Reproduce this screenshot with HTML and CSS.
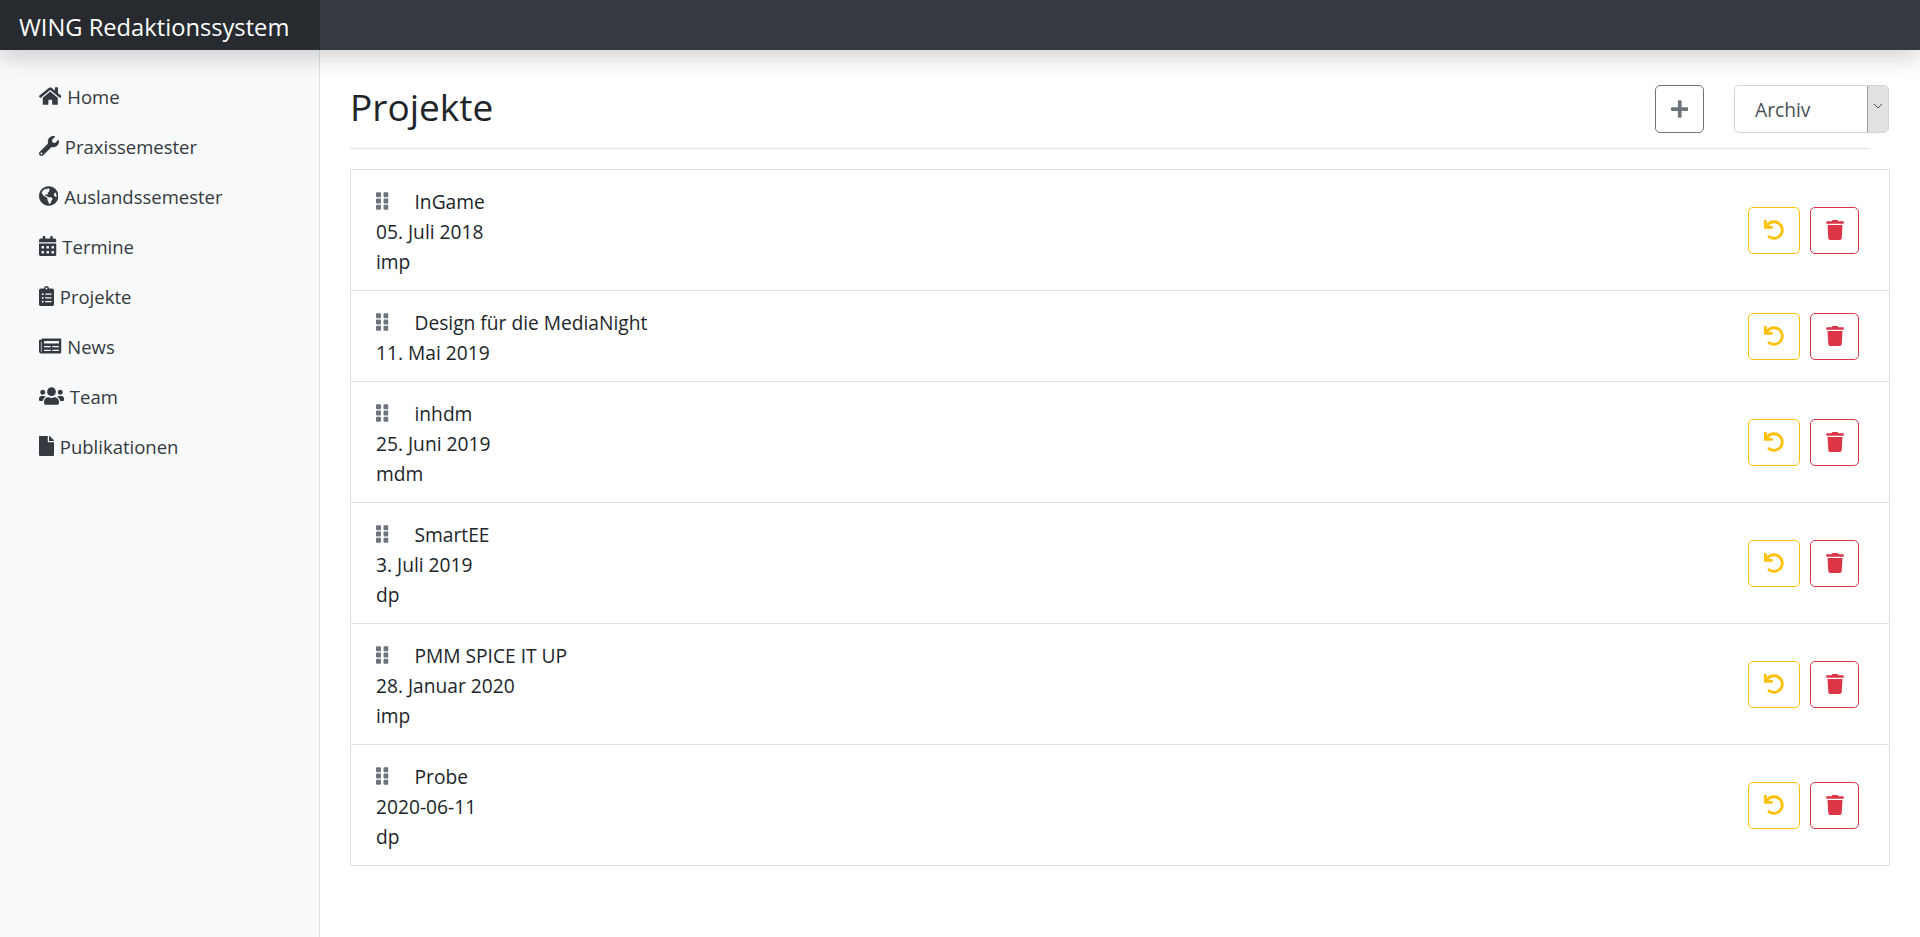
FILE: index.html
```html
<!DOCTYPE html>
<html lang="de">
<head>
<meta charset="utf-8">
<title>WING Redaktionssystem</title>
<link rel="stylesheet" href="styles.css">
</head>
<body>
<svg class="defs" aria-hidden="true">
<symbol id="i-home" viewBox="0 0 576 512"><path d="M280.37 148.26L96 300.11V464a16 16 0 0 0 16 16l112.06-.29a16 16 0 0 0 15.92-16V368a16 16 0 0 1 16-16h64a16 16 0 0 1 16 16v95.64a16 16 0 0 0 16 16.05L464 480a16 16 0 0 0 16-16V300L295.67 148.26a12.19 12.19 0 0 0-15.3 0zM571.6 251.47L488 182.56V44.05a12 12 0 0 0-12-12h-56a12 12 0 0 0-12 12v72.61L318.47 43a48 48 0 0 0-61 0L4.34 251.47a12 12 0 0 0-1.6 16.9l25.5 31A12 12 0 0 0 45.15 301l235.22-193.74a12.19 12.19 0 0 1 15.3 0L530.9 301a12 12 0 0 0 16.9-1.6l25.5-31a12 12 0 0 0-1.7-16.93z"/></symbol>
<symbol id="i-wrench" viewBox="0 0 512 512"><path d="M507.73 109.1c-2.24-9.03-13.54-12.09-20.12-5.51l-74.36 74.36-67.88-11.31-11.31-67.88 74.36-74.36c6.62-6.62 3.43-17.9-5.66-20.16-47.38-11.74-99.55.91-136.58 37.93-39.64 39.64-50.55 97.1-34.05 147.2L18.74 402.76c-24.99 24.99-24.99 65.51 0 90.5 24.99 24.99 65.51 24.99 90.5 0l213.21-213.21c50.12 16.71 107.47 5.68 147.37-34.22 37.07-37.07 49.7-89.32 37.91-136.73zM64 472c-13.25 0-24-10.75-24-24 0-13.26 10.75-24 24-24s24 10.74 24 24c0 13.25-10.75 24-24 24z"/></symbol>
<symbol id="i-globe" viewBox="0 0 496 512"><path d="M248 8C111.03 8 0 119.03 0 256s111.03 248 248 248 248-111.03 248-248S384.97 8 248 8zm82.29 357.6c-3.9 3.88-7.99 7.95-11.31 11.28-2.99 3-5.1 6.7-6.17 10.71-1.51 5.66-2.73 11.38-4.77 16.87l-17.39 46.85c-13.76 3-28 4.69-42.65 4.69v-27.38c1.69-12.62-7.64-36.26-22.63-51.25-6-6-9.37-14.14-9.37-22.63v-32.01c0-11.64-6.27-22.34-16.46-27.97-14.37-7.95-34.81-19.06-48.81-26.11-11.48-5.78-22.1-13.14-31.65-21.75l-.8-.72a114.792 114.792 0 0 1-18.06-20.74c-9.38-13.77-24.66-36.42-34.59-51.14 20.47-45.5 57.36-82.04 103.2-101.89l24.01 12.01C203.48 89.74 216 82.01 216 70.11v-11.3c7.99-1.29 16.12-2.11 24.39-2.42l28.3 28.3c6.25 6.25 6.25 16.38 0 22.63L264 112l-10.34 10.34c-3.12 3.12-3.12 8.19 0 11.31l4.69 4.69c3.12 3.12 3.12 8.19 0 11.31l-8 8a8.008 8.008 0 0 1-5.66 2.34h-8.99c-2.08 0-4.08.81-5.58 2.27l-9.92 9.65a8.008 8.008 0 0 0-1.58 9.31l15.59 31.19c2.66 5.32-1.21 11.58-7.15 11.58h-5.64c-1.93 0-3.79-.7-5.24-1.96l-9.28-8.06a16.017 16.017 0 0 0-15.55-3.1l-31.17 10.39a11.95 11.95 0 0 0-8.17 11.34c0 4.53 2.56 8.66 6.61 10.69l11.08 5.54c9.41 4.71 19.79 7.16 30.31 7.16s22.59 27.29 32 32h66.75c8.49 0 16.62 3.37 22.63 9.37l13.69 13.69a30.503 30.503 0 0 1 8.93 21.57 46.536 46.536 0 0 1-13.72 32.98zM417 274.25c-5.79-1.45-10.84-5-14.15-9.97l-17.98-26.97a23.97 23.97 0 0 1 0-26.62l19.59-29.38c2.32-3.47 5.5-6.29 9.24-8.15l12.98-6.49C440.2 193.59 448 223.87 448 256c0 8.67-.74 17.16-1.82 25.54L417 274.25z"/></symbol>
<symbol id="i-cal" viewBox="0 0 448 512"><path d="M0 464c0 26.5 21.5 48 48 48h352c26.5 0 48-21.5 48-48V192H0v272zm320-196c0-6.6 5.4-12 12-12h40c6.6 0 12 5.4 12 12v40c0 6.6-5.4 12-12 12h-40c-6.6 0-12-5.4-12-12v-40zm0 128c0-6.6 5.4-12 12-12h40c6.6 0 12 5.4 12 12v40c0 6.6-5.4 12-12 12h-40c-6.6 0-12-5.4-12-12v-40zM192 268c0-6.6 5.4-12 12-12h40c6.6 0 12 5.4 12 12v40c0 6.6-5.4 12-12 12h-40c-6.6 0-12-5.4-12-12v-40zm0 128c0-6.6 5.4-12 12-12h40c6.6 0 12 5.4 12 12v40c0 6.6-5.4 12-12 12h-40c-6.6 0-12-5.4-12-12v-40zM64 268c0-6.6 5.4-12 12-12h40c6.6 0 12 5.4 12 12v40c0 6.6-5.4 12-12 12H76c-6.6 0-12-5.4-12-12v-40zm0 128c0-6.6 5.4-12 12-12h40c6.6 0 12 5.4 12 12v40c0 6.6-5.4 12-12 12H76c-6.6 0-12-5.4-12-12v-40zM400 64h-48V16c0-8.8-7.2-16-16-16h-32c-8.8 0-16 7.2-16 16v48H160V16c0-8.8-7.2-16-16-16h-32c-8.8 0-16 7.2-16 16v48H48C21.5 64 0 85.5 0 112v48h448v-48c0-26.5-21.5-48-48-48z"/></symbol>
<symbol id="i-clip" viewBox="0 0 384 512"><path d="M336 64h-80c0-35.3-28.7-64-64-64s-64 28.7-64 64H48C21.5 64 0 85.5 0 112v352c0 26.5 21.5 48 48 48h288c26.5 0 48-21.5 48-48V112c0-26.5-21.5-48-48-48zM96 424c-13.3 0-24-10.7-24-24s10.7-24 24-24 24 10.7 24 24-10.7 24-24 24zm0-96c-13.3 0-24-10.7-24-24s10.7-24 24-24 24 10.7 24 24-10.7 24-24 24zm0-96c-13.3 0-24-10.7-24-24s10.7-24 24-24 24 10.7 24 24-10.7 24-24 24zm96-192c13.3 0 24 10.7 24 24s-10.7 24-24 24-24-10.7-24-24 10.7-24 24-24zm128 368c0 4.4-3.6 8-8 8H168c-4.4 0-8-3.6-8-8v-16c0-4.4 3.6-8 8-8h144c4.4 0 8 3.6 8 8v16zm0-96c0 4.4-3.6 8-8 8H168c-4.4 0-8-3.6-8-8v-16c0-4.4 3.6-8 8-8h144c4.4 0 8 3.6 8 8v16zm0-96c0 4.4-3.6 8-8 8H168c-4.4 0-8-3.6-8-8v-16c0-4.4 3.6-8 8-8h144c4.4 0 8 3.6 8 8v16z"/></symbol>
<symbol id="i-news" viewBox="0 0 576 512"><path d="M552 64H88c-13.255 0-24 10.745-24 24v8H24c-13.255 0-24 10.745-24 24v272c0 30.928 25.072 56 56 56h472c26.51 0 48-21.49 48-48V88c0-13.255-10.745-24-24-24zM56 400a8 8 0 0 1-8-8V144h16v248a8 8 0 0 1-8 8zm236-16H140c-6.627 0-12-5.373-12-12v-8c0-6.627 5.373-12 12-12h152c6.627 0 12 5.373 12 12v8c0 6.627-5.373 12-12 12zm208 0H348c-6.627 0-12-5.373-12-12v-8c0-6.627 5.373-12 12-12h152c6.627 0 12 5.373 12 12v8c0 6.627-5.373 12-12 12zm-208-96H140c-6.627 0-12-5.373-12-12v-8c0-6.627 5.373-12 12-12h152c6.627 0 12 5.373 12 12v8c0 6.627-5.373 12-12 12zm208 0H348c-6.627 0-12-5.373-12-12v-8c0-6.627 5.373-12 12-12h152c6.627 0 12 5.373 12 12v8c0 6.627-5.373 12-12 12zm0-96H140c-6.627 0-12-5.373-12-12v-40c0-6.627 5.373-12 12-12h360c6.627 0 12 5.373 12 12v40c0 6.627-5.373 12-12 12z"/></symbol>
<symbol id="i-users" viewBox="0 0 640 512"><path d="M96 224c35.3 0 64-28.7 64-64s-28.7-64-64-64-64 28.7-64 64 28.7 64 64 64zm448 0c35.3 0 64-28.7 64-64s-28.7-64-64-64-64 28.7-64 64 28.7 64 64 64zm32 32h-64c-17.6 0-33.5 7.1-45.1 18.6 40.3 22.1 68.9 62 75.1 109.4h66c17.7 0 32-14.3 32-32v-32c0-35.3-28.7-64-64-64zm-256 0c61.9 0 112-50.1 112-112S381.9 32 320 32 208 82.1 208 144s50.1 112 112 112zm76.8 32h-8.3c-20.8 10-43.9 16-68.5 16s-47.6-6-68.5-16h-8.3C179.6 288 128 339.6 128 403.2V432c0 26.5 21.5 48 48 48h288c26.5 0 48-21.5 48-48v-28.8c0-63.6-51.6-115.2-115.2-115.2zm-223.7-13.4C161.5 263.1 145.6 256 128 256H64c-35.3 0-64 28.7-64 64v32c0 17.7 14.3 32 32 32h65.9c6.3-47.4 34.9-87.3 75.2-109.4z"/></symbol>
<symbol id="i-file" viewBox="0 0 384 512"><path d="M224 136V0H24C10.7 0 0 10.7 0 24v464c0 13.3 10.7 24 24 24h336c13.3 0 24-10.7 24-24V160H248c-13.2 0-24-10.8-24-24zm160-14.1v6.1H256V0h6.1c6.4 0 12.5 2.5 17 7l97.9 98c4.5 4.5 7 10.6 7 16.9z"/></symbol>
<symbol id="i-plus" viewBox="0 0 448 512"><path d="M416 208H272V64c0-17.67-14.33-32-32-32h-32c-17.67 0-32 14.33-32 32v144H32c-17.67 0-32 14.33-32 32v32c0 17.67 14.33 32 32 32h144v144c0 17.67 14.33 32 32 32h32c17.67 0 32-14.33 32-32V304h144c17.67 0 32-14.33 32-32v-32c0-17.67-14.33-32-32-32z"/></symbol>
<symbol id="i-undo" viewBox="0 0 512 512"><path d="M212.333 224.333H12c-6.627 0-12-5.373-12-12V12C0 5.373 5.373 0 12 0h48c6.627 0 12 5.373 12 12v78.112C117.773 39.279 184.26 7.47 258.175 8.007c136.906.994 246.448 111.623 246.157 248.532C504.041 393.258 393.12 504 256.333 504c-64.089 0-122.496-24.313-166.51-64.215-5.099-4.622-5.334-12.554-.467-17.42l33.967-33.967c4.474-4.474 11.662-4.717 16.401-.525C170.76 415.336 211.58 432 256.333 432c97.268 0 176-78.716 176-176 0-97.267-78.716-176-176-176-58.496 0-110.28 28.476-142.274 72.333h98.274c6.627 0 12 5.373 12 12v48c0 6.627-5.373 12-12 12z"/></symbol>
<symbol id="i-trash" viewBox="0 0 448 512"><path d="M432 32H312l-9.4-18.7A24 24 0 0 0 281.1 0H166.8a23.72 23.72 0 0 0-21.4 13.3L136 32H16A16 16 0 0 0 0 48v32a16 16 0 0 0 16 16h416a16 16 0 0 0 16-16V48a16 16 0 0 0-16-16zM53.2 467a48 48 0 0 0 47.9 45h245.8a48 48 0 0 0 47.9-45L416 128H32z"/></symbol>
<symbol id="i-grip" viewBox="0 0 320 512"><path d="M96 32H32C14.33 32 0 46.33 0 64v64c0 17.67 14.33 32 32 32h64c17.67 0 32-14.33 32-32V64c0-17.67-14.33-32-32-32zm0 160H32c-17.67 0-32 14.33-32 32v64c0 17.67 14.33 32 32 32h64c17.67 0 32-14.33 32-32v-64c0-17.67-14.33-32-32-32zm0 160H32c-17.67 0-32 14.33-32 32v64c0 17.67 14.33 32 32 32h64c17.67 0 32-14.33 32-32v-64c0-17.67-14.33-32-32-32zM288 32h-64c-17.67 0-32 14.33-32 32v64c0 17.67 14.33 32 32 32h64c17.67 0 32-14.33 32-32V64c0-17.67-14.33-32-32-32zm0 160h-64c-17.67 0-32 14.33-32 32v64c0 17.67 14.33 32 32 32h64c17.67 0 32-14.33 32-32v-64c0-17.67-14.33-32-32-32zm0 160h-64c-17.67 0-32 14.33-32 32v64c0 17.67 14.33 32 32 32h64c17.67 0 32-14.33 32-32v-64c0-17.67-14.33-32-32-32z"/></symbol>
</svg>

<header class="navbar"><a class="brand" href="#">WING Redaktionssystem</a></header>

<div class="layout">
  <nav class="sidebar">
    <ul class="nav">
      <li><a href="#"><svg class="ico w-home"><use href="#i-home"/></svg> Home</a></li>
      <li><a href="#"><svg class="ico w-wrench"><use href="#i-wrench"/></svg> Praxissemester</a></li>
      <li><a href="#"><svg class="ico w-globe"><use href="#i-globe"/></svg> Auslandssemester</a></li>
      <li><a href="#"><svg class="ico w-cal"><use href="#i-cal"/></svg> Termine</a></li>
      <li><a href="#"><svg class="ico w-clip"><use href="#i-clip"/></svg> Projekte</a></li>
      <li><a href="#"><svg class="ico w-home"><use href="#i-news"/></svg> News</a></li>
      <li><a href="#"><svg class="ico w-users"><use href="#i-users"/></svg> Team</a></li>
      <li><a href="#"><svg class="ico w-clip"><use href="#i-file"/></svg> Publikationen</a></li>
    </ul>
  </nav>

  <main class="content">
    <div class="head">
      <h1>Projekte</h1>
      <div class="controls">
        <button class="btn btn-plus"><svg class="ico w-plus"><use href="#i-plus"/></svg></button>
        <div class="select"><span class="select-label">Archiv</span><span class="spin"><svg class="chev" viewBox="0 0 10 6"><path d="M1 1l4 4 4-4"/></svg></span></div>
      </div>
    </div>

    <ul class="list">
      <li class="row">
        <div class="info"><div><svg class="grip"><use href="#i-grip"/></svg>InGame</div><div>05. Juli 2018</div><div>imp</div></div>
        <div class="actions"><button class="btn btn-undo"><svg class="ico w-clip2"><use href="#i-undo"/></svg></button><button class="btn btn-del"><svg class="ico w-clip2"><use href="#i-trash"/></svg></button></div>
      </li>
      <li class="row">
        <div class="info"><div><svg class="grip"><use href="#i-grip"/></svg>Design für die MediaNight</div><div>11. Mai 2019</div></div>
        <div class="actions"><button class="btn btn-undo"><svg class="ico w-clip2"><use href="#i-undo"/></svg></button><button class="btn btn-del"><svg class="ico w-clip2"><use href="#i-trash"/></svg></button></div>
      </li>
      <li class="row">
        <div class="info"><div><svg class="grip"><use href="#i-grip"/></svg>inhdm</div><div>25. Juni 2019</div><div>mdm</div></div>
        <div class="actions"><button class="btn btn-undo"><svg class="ico w-clip2"><use href="#i-undo"/></svg></button><button class="btn btn-del"><svg class="ico w-clip2"><use href="#i-trash"/></svg></button></div>
      </li>
      <li class="row">
        <div class="info"><div><svg class="grip"><use href="#i-grip"/></svg>SmartEE</div><div>3. Juli 2019</div><div>dp</div></div>
        <div class="actions"><button class="btn btn-undo"><svg class="ico w-clip2"><use href="#i-undo"/></svg></button><button class="btn btn-del"><svg class="ico w-clip2"><use href="#i-trash"/></svg></button></div>
      </li>
      <li class="row">
        <div class="info"><div><svg class="grip"><use href="#i-grip"/></svg>PMM SPICE IT UP</div><div>28. Januar 2020</div><div>imp</div></div>
        <div class="actions"><button class="btn btn-undo"><svg class="ico w-clip2"><use href="#i-undo"/></svg></button><button class="btn btn-del"><svg class="ico w-clip2"><use href="#i-trash"/></svg></button></div>
      </li>
      <li class="row">
        <div class="info"><div><svg class="grip"><use href="#i-grip"/></svg>Probe</div><div>2020-06-11</div><div>dp</div></div>
        <div class="actions"><button class="btn btn-undo"><svg class="ico w-clip2"><use href="#i-undo"/></svg></button><button class="btn btn-del"><svg class="ico w-clip2"><use href="#i-trash"/></svg></button></div>
      </li>
    </ul>
  </main>
</div>
</body>
</html>
```
FILE: styles.css
```css
* { box-sizing: border-box; }
html, body { height: 100%; }
body {
  margin: 0;
  font-family: "Open Sans", "Noto Sans", sans-serif;
  font-size: 19.2px;
  line-height: 30px;
  color: #212529;
  background: #fff;
  overflow: hidden;
  display: flex;
  flex-direction: column;
}
.defs { display: none; }
a { color: inherit; text-decoration: none; }
ul { list-style: none; margin: 0; padding: 0; }

.navbar {
  flex: none;
  height: 50px;
  background: #343a40;
  box-shadow: 0 10px 20px rgba(0, 0, 0, .15);
  position: relative;
  z-index: 2;
}
.brand {
  display: block;
  width: 320px;
  height: 50px;
  padding-left: 19px;
  font-size: 23.7px;
  line-height: 54px;
  color: #fff;
  background: rgba(0, 0, 0, .25);
}

.layout { flex: 1; display: flex; min-height: 0; }

.sidebar {
  flex: none;
  width: 320px;
  padding: 22px 0 0 39px;
  background: #f8f9fa;
  border-right: 1px solid #dee2e6;
  color: #343a40;
  font-size: 18.5px;
}
.nav li { height: 50px; }
.nav a { display: block; line-height: 50px; }
.nav .ico { vertical-align: -2px; fill: #343a40; margin-right: 1px; }

.ico { height: 20px; fill: currentColor; }
.w-home { width: 22.5px; }
.w-wrench { width: 20px; }
.w-globe { width: 19.4px; }
.w-cal { width: 17.5px; }
.w-clip { width: 15px; }
.w-clip2 { width: 20px; }
.w-users { width: 25px; }
.w-plus { width: 17.5px; }

.content { flex: 1; min-width: 0; padding: 0 30px; }

.head {
  display: flex;
  justify-content: space-between;
  align-items: center;
  height: 99px;
  margin-right: 20px;
  border-bottom: 1px solid #dee2e6;
  margin-bottom: 20px;
}
h1 { margin: 16px 0 0; font-size: 37px; font-weight: 400; line-height: 46px; }
.controls { display: flex; gap: 30px; margin-right: -19px; margin-top: 20px; }

.btn {
  display: flex;
  align-items: center;
  justify-content: center;
  padding: 0;
  background: #fff;
  border: 1px solid;
  border-radius: 5px;
}
.btn-plus { width: 49px; height: 48px; border-color: #6c757d; color: #6c757d; }
.btn-undo { width: 52px; height: 47px; border-color: #ffc107; color: #ffc107; }
.btn-del { width: 49px; height: 47px; border-color: #dc3545; color: #dc3545; }

.select {
  width: 155px;
  height: 48px;
  display: flex;
  align-items: center;
  justify-content: space-between;
  padding-left: 20px;
  background: #fff;
  border: 1px solid #ced4da;
  border-radius: 5px;
  color: #495057;
  overflow: hidden;
}
.select-label { padding-top: 2px; }
.spin {
  display: flex;
  align-items: center;
  justify-content: center;
  width: 21px;
  height: 46px;
  background: #e1e1e1;
  border-left: 1px solid #a0a0a0;
  padding-bottom: 6px;
}
.chev { width: 10px; height: 6px; fill: none; stroke: #505050; stroke-width: 1; }

.list { border: 1px solid #dee2e6; border-bottom: 0; }
.row {
  display: flex;
  align-items: center;
  justify-content: space-between;
  padding: 0 30px 0 25px;
  border-bottom: 1px solid #dee2e6;
}
.info { padding: 17px 0 13px; }
.grip { width: 12.5px; height: 20px; fill: #6c757d; margin-right: 26px; vertical-align: -2px; }
.actions { display: flex; gap: 10px; }
```
